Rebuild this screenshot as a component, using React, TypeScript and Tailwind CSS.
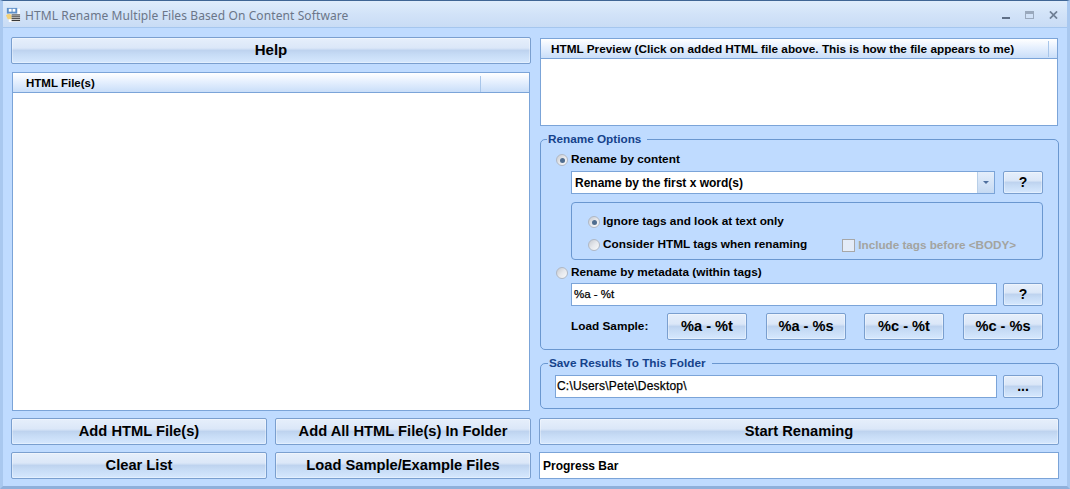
import React from 'react';

const btn = 'flex items-center justify-center rounded-[2px] border border-[#7a9fcf] bg-[linear-gradient(180deg,#e6effb_0%,#dbe7f8_40%,#bed3ef_50%,#c6dbf5_65%,#d6e8fe_100%)] font-bold text-black shadow-[inset_0_0_0_1px_rgba(255,255,255,0.35)]';
const headerBar = 'flex h-[20px] items-center bg-[linear-gradient(180deg,#ffffff_0%,#e6f0fe_45%,#c9def9_100%)] border-b border-[#7ba4d8] font-bold text-black';

function Radio({ on }: { on?: boolean }) {
  return (
    <span className="flex h-[12px] w-[12px] shrink-0 items-center justify-center rounded-full border border-[#b0b8c4] bg-[linear-gradient(135deg,#c6cad1_0%,#e6e8ec_50%,#f8f9fa_100%)]">
      {on && <span className="h-[5px] w-[5px] rounded-full bg-[#4f6d90]" />}
    </span>
  );
}

function AppIcon() {
  return (
    <svg width="16" height="17" viewBox="0 0 17 18" className="mt-[1px] shrink-0">
      <path d="M4 3h12v14H4z" fill="#fff" />
      <path d="M1 10c2-2 5-2 6 0v4H3z" fill="#f3d27a" />
      <rect x="2" y="2" width="11" height="6" fill="#5d8fc9" />
      <rect x="4" y="3" width="3" height="3" fill="#fff" />
      <rect x="8" y="3" width="3" height="3" fill="#fff" />
      <path d="M7 9.5h9M7 11.5h9M7 13.5h9M7 15.5h9" stroke="#111" strokeWidth="1" />
    </svg>
  );
}

export default function App() {
  return (
    <div className="flex h-[489px] w-[1070px] flex-col overflow-hidden border-x-[3px] border-b-[3px] border-t border-x-[#a9c8ef] border-b-[#8fb0db] border-t-[#3f6594] bg-[#bfdbff] font-['Liberation_Sans',sans-serif] text-black">
      {/* title bar */}
      <div className="mx-[-3px] flex h-[27px] shrink-0 items-center border-b border-[#a5c6ee] bg-[linear-gradient(180deg,#dfecfb_0%,#d2e3f8_50%,#c9dcf5_100%)] pl-[5px] pr-[12px]">
        <AppIcon />
        <span className="ml-[4px] mt-[4px] font-['Noto_Sans',sans-serif] text-[12px] tracking-[0.1px] text-[#6b7688]">HTML Rename Multiple Files Based On Content Software</span>
        <div className="ml-auto mt-[2px] flex items-center gap-[15px]">
          <span className="mt-[6px] h-[2px] w-[8px] bg-[#5f6f86]" />
          <span className="h-[8px] w-[9px] border border-t-[3px] border-[#9aa9bd]" />
          <svg width="9" height="8" viewBox="0 0 10 9">
            <path d="M1 0.5l8 8M9 0.5l-8 8" stroke="#6f7f95" strokeWidth="2" />
          </svg>
        </div>
      </div>

      <div className="flex flex-1 gap-[8px] pl-[8px] pr-[8px] pt-[9px]">
        {/* left column */}
        <div className="flex w-[520px] flex-col">
          <button className={`${btn} h-[27px] text-[15px]`}>Help</button>
          <div className="ml-[1px] mt-[8px] flex h-[339px] w-[518px] flex-col border border-[#7ba4d8] bg-white">
            <div className={`${headerBar} pt-[2px] text-[11.5px]`}>
              <span className="pl-[13px]">HTML File(s)</span>
              <span className="ml-[385px] h-[16px] w-px bg-[#a8c6ea]" />
            </div>
          </div>
          <div className="mt-[7px] flex gap-[8px]">
            <button className={`${btn} h-[27px] w-[256px] text-[14.7px]`}>Add HTML File(s)</button>
            <button className={`${btn} h-[27px] w-[256px] text-[14.7px]`}>Add All HTML File(s) In Folder</button>
          </div>
          <div className="mt-[7px] flex gap-[8px]">
            <button className={`${btn} h-[27px] w-[256px] text-[14.7px]`}>Clear List</button>
            <button className={`${btn} h-[27px] w-[256px] text-[14.7px]`}>Load Sample/Example Files</button>
          </div>
        </div>

        {/* right column */}
        <div className="mt-[1px] flex w-[520px] flex-col">
          <div className="ml-[1px] h-[88px] w-[518px] border border-[#7ba4d8] bg-white">
            <div className={`${headerBar} pt-[1px] text-[11.77px]`}>
              <span className="pl-[10px]">HTML Preview (Click on added HTML file above. This is how the file appears to me)</span>
              <span className="ml-auto mr-[8px] h-[16px] w-px bg-[#a8c6ea]" />
            </div>
          </div>

          <fieldset className="ml-[1px] mt-[6px] h-[218px] w-[519px] rounded-[5px] border border-[#6a97d0] pl-[30px] pr-[15px] text-[11.8px] font-bold">
            <legend className="ml-[-24px] px-[1px] pb-[2px] pr-[6px] text-[11.75px] font-bold leading-[13px] text-[#15428b]">Rename Options</legend>
            <div className="ml-[-15px] mt-[6px] flex h-[14px] items-center gap-[3px]"><Radio on /><span>Rename by content</span></div>
            <div className="mt-[4px] flex gap-[8px]">
              <div className="flex h-[23px] w-[424px] items-center border border-[#7ba4d8] bg-white pl-[3px] text-[12px]">
                <span>Rename by the first x word(s)</span>
                <span className="ml-auto flex h-[21px] w-[17px] items-center justify-center border-l border-[#b8cfe8] bg-[linear-gradient(180deg,#e4eefb_0%,#c6daf3_100%)]">
                  <span className="h-0 w-0 border-x-[3px] border-t-[3px] border-x-transparent border-t-[#4f6f9e]" />
                </span>
              </div>
              <button className={`${btn} h-[23px] w-[40px] text-[14px]`}>?</button>
            </div>
            <div className="mt-[8px] flex h-[58px] w-[472px] flex-col gap-[9px] rounded-[4px] border border-[#6a97d0] pl-[16px] pt-[12px]">
              <div className="flex h-[14px] items-center gap-[3px]"><Radio on /><span>Ignore tags and look at text only</span></div>
              <div className="flex h-[14px] items-center gap-[3px]">
                <Radio />
                <span>Consider HTML tags when renaming</span>
                <span className="ml-[32px] h-[13px] w-[13px] border border-[#a7a7a7] bg-[#e4ecf8]" />
                <span className="text-[11.7px] text-[#a3a49f]">Include tags before &lt;BODY&gt;</span>
              </div>
            </div>
            <div className="ml-[-15px] mt-[6px] flex h-[14px] items-center gap-[3px]"><Radio /><span>Rename by metadata (within tags)</span></div>
            <div className="mt-[3px] flex gap-[6px]">
              <div className="flex h-[23px] w-[426px] items-center border border-[#7ba4d8] bg-white pl-[2px] text-[11.5px] font-normal [-webkit-text-stroke:0.25px_black]">%a - %t</div>
              <button className={`${btn} h-[23px] w-[40px] text-[14px]`}>?</button>
            </div>
            <div className="mt-[7px] flex items-center">
              <span className="w-[96px]">Load Sample:</span>
              <div className="flex">
                <button className={`${btn} h-[27px] w-[80px] text-[14.6px]`}>%a - %t</button>
                <button className={`${btn} ml-[19px] h-[27px] w-[80px] text-[14.6px]`}>%a - %s</button>
                <button className={`${btn} ml-[18px] h-[27px] w-[80px] text-[14.6px]`}>%c - %t</button>
                <button className={`${btn} ml-[19px] h-[27px] w-[80px] text-[14.6px]`}>%c - %s</button>
              </div>
            </div>
          </fieldset>

          <fieldset className="ml-[1px] mt-[6px] h-[53px] w-[519px] rounded-[5px] border border-[#6a97d0] pl-[14px] pr-[15px] text-[12px] font-bold">
            <legend className="ml-[-7px] px-[1px] pb-[2px] pr-[6px] text-[11.75px] font-bold leading-[13px] text-[#15428b]">Save Results To This Folder</legend>
            <div className="mt-[4px] flex gap-[6px]">
              <div className="flex h-[23px] w-[442px] items-center border border-[#7ba4d8] bg-white pb-[1px] pl-[1px] font-normal tracking-[0.2px] [-webkit-text-stroke:0.25px_black]">C:\Users\Pete\Desktop\</div>
              <button className={`${btn} h-[23px] w-[40px] text-[14px]`}>...</button>
            </div>
          </fieldset>

          <button className={`${btn} mt-[9px] h-[27px] w-[520px] text-[14.7px]`}>Start Renaming</button>
          <div className="mt-[7px] flex h-[27px] w-[520px] items-center border border-[#7ba4d8] bg-white pl-[3px] text-[12px] font-bold">Progress Bar</div>
        </div>
      </div>
    </div>
  );
}
